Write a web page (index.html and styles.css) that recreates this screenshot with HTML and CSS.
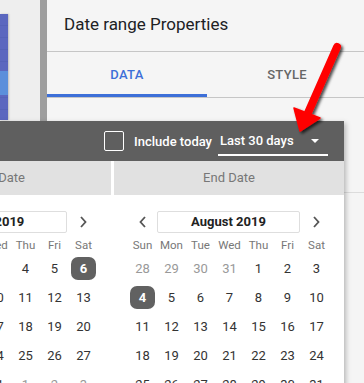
FILE: index.html
```html
<!DOCTYPE html>
<html>
<head>
<meta charset="UTF-8">
<link rel="stylesheet" href="styles.css">
</head>
<body>

<div class="side">
	<div class="chart"><div class="hilite"></div></div>
</div>
<div class="split"></div>

<div class="panel">
	<div class="title">Date range Properties</div>
	<div class="tabs">
		<div class="tab on">DATA</div>
		<div class="tab">STYLE</div>
	</div>
	<div class="section"></div>
</div>

<div class="popup">
	<div class="bar">
		<span class="box"></span>
		<span class="inc">Include today</span>
		<span class="range">Last 30 days <span class="caret"></span></span>
	</div>
	<div class="heads">
		<div class="head">Start Date</div>
		<div class="head">End Date</div>
	</div>
	<div class="cals">
		<div class="cal">
			<div class="nav">
				<svg class="chev" width="8" height="12" viewBox="0 0 8 12"><polyline points="6,1 1.5,6 6,11"/></svg>
				<div class="month">July 2019</div>
				<svg class="chev" width="8" height="12" viewBox="0 0 8 12"><polyline points="2,1 6.5,6 2,11"/></svg>
			</div>
			<div class="grid">
				<span class="dn">Sun</span><span class="dn">Mon</span><span class="dn">Tue</span><span class="dn">Wed</span><span class="dn">Thu</span><span class="dn">Fri</span><span class="dn">Sat</span>
				<span class="d off">30</span><span class="d">1</span><span class="d">2</span><span class="d">3</span><span class="d">4</span><span class="d">5</span><span class="d"><b class="sel">6</b></span>
				<span class="d">7</span><span class="d">8</span><span class="d">9</span><span class="d">10</span><span class="d">11</span><span class="d">12</span><span class="d">13</span>
				<span class="d">14</span><span class="d">15</span><span class="d">16</span><span class="d">17</span><span class="d">18</span><span class="d">19</span><span class="d">20</span>
				<span class="d">21</span><span class="d">22</span><span class="d">23</span><span class="d">24</span><span class="d">25</span><span class="d">26</span><span class="d">27</span>
				<span class="d">28</span><span class="d">29</span><span class="d">30</span><span class="d">31</span><span class="d off">1</span><span class="d off">2</span><span class="d off">3</span>
			</div>
		</div>
		<div class="cal">
			<div class="nav">
				<svg class="chev" width="8" height="12" viewBox="0 0 8 12"><polyline points="6,1 1.5,6 6,11"/></svg>
				<div class="month">August 2019</div>
				<svg class="chev" width="8" height="12" viewBox="0 0 8 12"><polyline points="2,1 6.5,6 2,11"/></svg>
			</div>
			<div class="grid">
				<span class="dn">Sun</span><span class="dn">Mon</span><span class="dn">Tue</span><span class="dn">Wed</span><span class="dn">Thu</span><span class="dn">Fri</span><span class="dn">Sat</span>
				<span class="d off">28</span><span class="d off">29</span><span class="d off">30</span><span class="d off">31</span><span class="d">1</span><span class="d">2</span><span class="d">3</span>
				<span class="d"><b class="sel">4</b></span><span class="d">5</span><span class="d">6</span><span class="d">7</span><span class="d">8</span><span class="d">9</span><span class="d">10</span>
				<span class="d">11</span><span class="d">12</span><span class="d">13</span><span class="d">14</span><span class="d">15</span><span class="d">16</span><span class="d">17</span>
				<span class="d">18</span><span class="d">19</span><span class="d">20</span><span class="d">21</span><span class="d">22</span><span class="d">23</span><span class="d">24</span>
				<span class="d">25</span><span class="d">26</span><span class="d">27</span><span class="d">28</span><span class="d">29</span><span class="d">30</span><span class="d">31</span>
			</div>
		</div>
	</div>
</div>

<svg class="arrow" width="364" height="383" viewBox="0 0 364 383">
	<defs>
		<filter id="shade" x="-50%" y="-50%" width="200%" height="200%">
			<feDropShadow dx="2" dy="2" stdDeviation="1.5" flood-color="#000" flood-opacity="0.7"/>
		</filter>
	</defs>
	<g filter="url(#shade)" fill="#f00" stroke="#f00">
		<line x1="337" y1="47" x2="307" y2="115" stroke-width="8" stroke-linecap="round"/>
		<polygon points="300,131 294,108 320,118" stroke-width="1.5" stroke-linejoin="round"/>
	</g>
</svg>

</body>
</html>
```

FILE: styles.css
```css
body {
    margin: 0;
    width: 364px;
    height: 383px;
    overflow: hidden;
    display: flex;
    background: #eeeeee;
    font-family: Roboto, "Liberation Sans", sans-serif;
}

.side {
    width: 40px;
    flex: none;
}
.chart {
    width: 8px;
    height: 106px;
    margin-top: 14px;
    padding-top: 57px;
    box-sizing: border-box;
    background: repeating-linear-gradient(#5b67bf 0, #5b67bf 11px, #5562b8 11px, #5562b8 12px);
    box-shadow: 1px 0 2px rgba(0, 0, 0, 0.2);
}
.hilite {
    height: 24px;
    background: #5b8fdb;
}
.split {
    width: 7px;
    flex: none;
    background: #9e9e9e;
}

.panel {
    flex: 1;
    background: #f5f5f5;
}
.title {
    height: 51px;
    padding-left: 17px;
    line-height: 49px;
    font-size: 17px;
    color: #202124;
    border-bottom: 1px solid #c6c6c6;
}
.tabs {
    display: flex;
    height: 45px;
    border-bottom: 1px solid #c6c6c6;
}
.tab {
    width: 160px;
    text-align: center;
    line-height: 45px;
    font-size: 13px;
    font-weight: 500;
    letter-spacing: 0.3px;
    color: #666;
}
.tab.on {
    color: #3d6fd8;
    box-shadow: inset 0 -3px 0 #3d6fd8;
}
.section {
    height: 94px;
    border-bottom: 1px solid #dcdcdc;
}

.popup {
    position: absolute;
    left: -119px;
    top: 121px;
    width: 463px;
    height: 300px;
    background: #fff;
    box-shadow: 2px 2px 5px rgba(0, 0, 0, 0.25);
}
.bar {
    height: 40px;
    background: #5f5f5f;
    display: flex;
    align-items: center;
    justify-content: flex-end;
    padding-right: 16px;
    color: #fff;
}
.box {
    width: 20px;
    height: 20px;
    box-sizing: border-box;
    border: 1.5px solid #fff;
    border-radius: 2px;
    margin-right: 10px;
}
.inc {
    font-size: 13px;
    font-weight: 500;
    margin-right: 6px;
}
.range {
    width: 110px;
    height: 30px;
    box-sizing: border-box;
    padding: 7px 0 0 2px;
    border-bottom: 2px solid #fff;
    font-size: 13px;
    font-weight: 500;
    position: relative;
}
.caret {
    position: absolute;
    right: 9px;
    top: 13px;
    border-left: 4px solid transparent;
    border-right: 4px solid transparent;
    border-top: 4px solid #fff;
}

.heads {
    display: grid;
    grid-template-columns: 230px 230px;
    gap: 3px;
}
.head {
    height: 34px;
    line-height: 34px;
    background: #e1e1e1;
    text-align: center;
    font-size: 13px;
    color: #777;
}

.cals {
    display: grid;
    grid-template-columns: 230px 230px;
    gap: 3px;
}
.cal {
    padding: 16px 13px 0 14px;
}
.nav {
    display: grid;
    grid-template-columns: 29px 143px 31px;
    align-items: center;
    height: 22px;
    margin-bottom: 4px;
}
.chev {
    justify-self: center;
    fill: none;
    stroke: #555;
    stroke-width: 1.8;
}
.month {
    height: 22px;
    box-sizing: border-box;
    border: 1px solid #dedede;
    border-radius: 2px;
    text-align: center;
    line-height: 20px;
    font-size: 13px;
    font-weight: 700;
    color: #222;
}
.grid {
    display: grid;
    grid-template-columns: repeat(7, 29px);
    grid-template-rows: 17px;
    grid-auto-rows: 29px;
}
.dn {
    text-align: center;
    font-size: 11.5px;
    color: #777;
    line-height: 17px;
}
.d {
    display: flex;
    align-items: center;
    justify-content: center;
    font-size: 13px;
    color: #333;
}
.d.off {
    color: #999;
}
.sel {
    width: 25px;
    height: 23px;
    border-radius: 7px;
    background: #616161;
    color: #fff;
    display: flex;
    align-items: center;
    justify-content: center;
}

.arrow {
    position: absolute;
    left: 0;
    top: 0;
}
```
